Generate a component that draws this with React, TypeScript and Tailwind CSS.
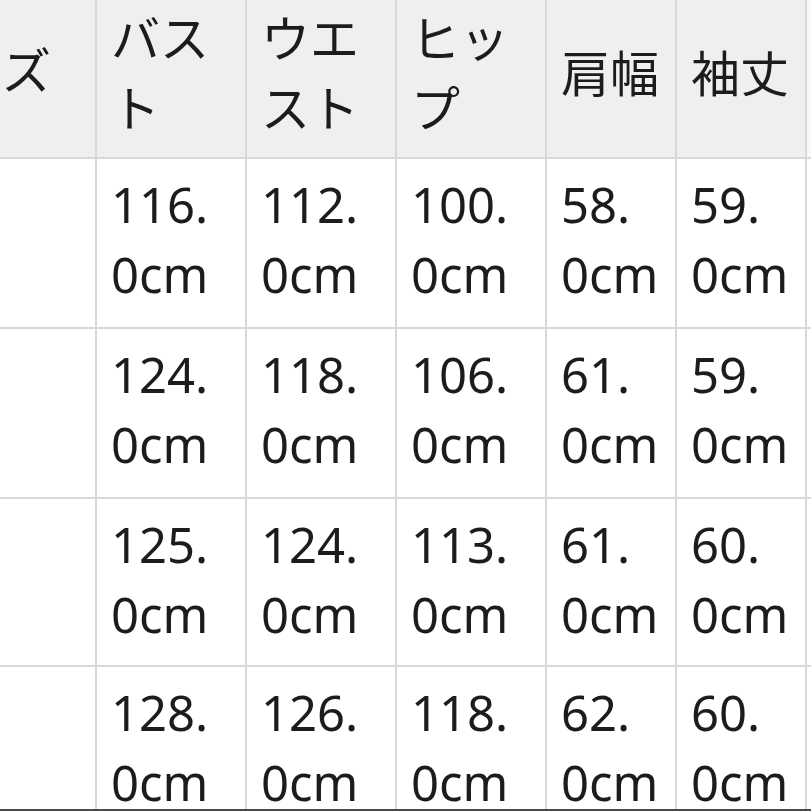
import React from 'react';

const headers = ['バスト', 'ウエスト', 'ヒップ', '肩幅', '袖丈'];

const rows: string[][] = [
  ['116.', '112.', '100.', '58.', '59.'],
  ['124.', '118.', '106.', '61.', '59.'],
  ['125.', '124.', '113.', '61.', '60.'],
  ['128.', '126.', '118.', '62.', '60.'],
];

export default function App() {
  return (
    <div
      className="w-[811px] h-[811px] overflow-hidden flex flex-col bg-white text-[#1c1c1c]"
      style={{ fontFamily: '"Noto Sans", "Noto Sans CJK JP", sans-serif' }}
    >
      <div className="h-[809px] overflow-hidden bg-[#d8d8d8]">
        <div className="grid grid-cols-[95px_148px_148px_148px_128px_128px_1fr] grid-rows-[157px_168px_168px_166px_168px] gap-[2px] text-[49px] leading-[70px]">
          <div className="bg-[#efefef] flex items-center pb-[18px] pl-[2px]">ズ</div>
          {headers.map((h) => (
            <div key={h} className="bg-[#efefef] flex items-center pb-[12px] pl-[14px] pr-[2px]">
              <span>{h}</span>
            </div>
          ))}
          <div className="bg-[#f7f7f7]" />

          {rows.map((r, i) => (
            <React.Fragment key={i}>
              <div className="bg-white" />
              {r.map((v, j) => (
                <div key={j} className="bg-white pt-[10px] pl-[14px]">
                  <div>{v}</div>
                  <div>0cm</div>
                </div>
              ))}
              <div className="bg-white" />
            </React.Fragment>
          ))}
        </div>
      </div>
      <div className="h-[2px] bg-[#4a4a4a]" />
    </div>
  );
}
